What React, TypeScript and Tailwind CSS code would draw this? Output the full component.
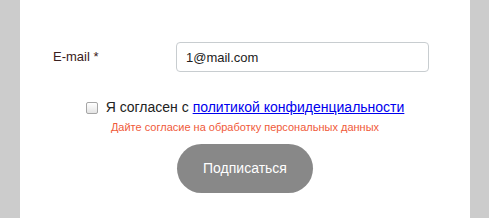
import React from "react";

export default function App() {
  return (
    <div className="w-[489px] h-[218px] bg-[#cccccc] flex overflow-hidden" style={{ fontFamily: '"Liberation Sans", Arial, sans-serif' }}>
      <div className="ml-[20px] w-[450px] h-full bg-white flex flex-col">
        <div className="mt-[42px] flex items-center pl-[33px]">
          <label className="w-[123px] text-[13px] text-[#3a2020]">E-mail *</label>
          <input
            className="w-[253px] h-[30px] border border-[#c8cdd0] rounded-[4px] px-[9px] text-[13px] text-[#222] outline-none"
            defaultValue="1@mail.com"
          />
        </div>
        <div className="mt-[27px] flex items-center justify-center">
          <span className="w-[12px] h-[12px] border border-[#a6a6a6] rounded-[2px] bg-gradient-to-b from-white to-[#e4e4e4] mr-[8px]" />
          <span className="text-[14px] text-[#222] leading-[17px]">
            Я согласен с{" "}
            <a href="#" className="text-[#0000ee] underline">политикой конфиденциальности</a>
          </span>
        </div>
        <div className="mt-[4px] text-center text-[11px] text-[#f05a3a] leading-[14px]">
          Дайте согласие на обработку персональных данных
        </div>
        <div className="mt-[10px] flex justify-center">
          <button className="w-[136px] h-[49px] rounded-full bg-[#888888] text-white text-[14px]">
            Подписаться
          </button>
        </div>
      </div>
    </div>
  );
}
